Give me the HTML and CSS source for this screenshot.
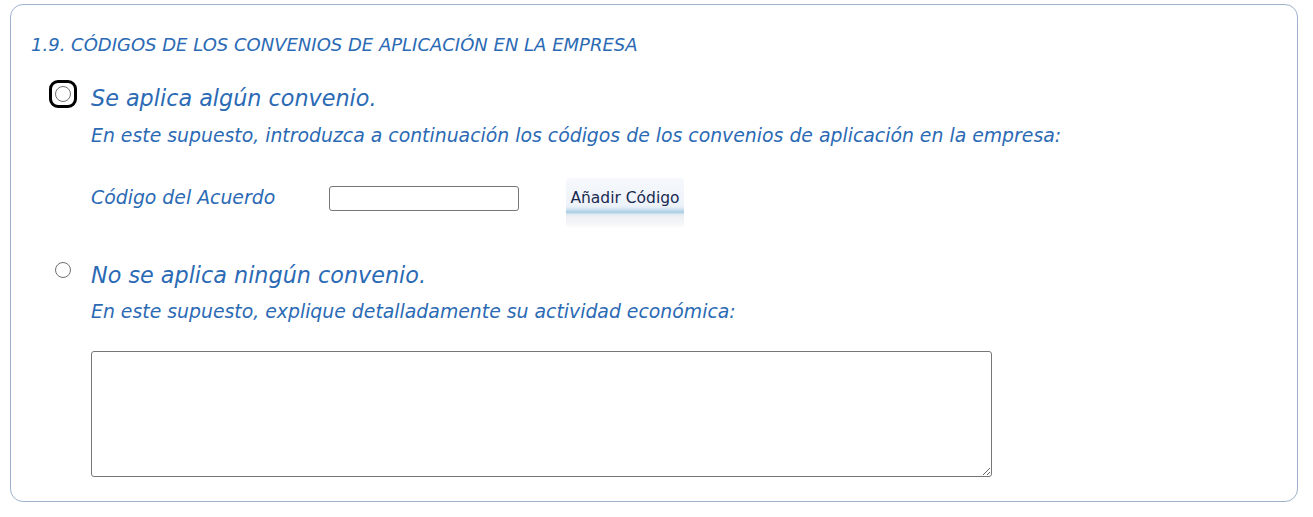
FILE: index.html
```html
<!DOCTYPE html>
<html lang="es">
<head>
<meta charset="utf-8">
<link rel="stylesheet" href="styles.css">
</head>
<body>
<div class="panel">
  <div class="title">1.9. CÓDIGOS DE LOS CONVENIOS DE APLICACIÓN EN LA EMPRESA</div>
  <div class="option option1">
    <span class="radio-wrap focused"><span class="radio"></span></span>
    <span class="opt-label">Se aplica algún convenio.</span>
  </div>
  <div class="hint">En este supuesto, introduzca a continuación los códigos de los convenios de aplicación en la empresa:</div>
  <div class="code-row">
    <span class="code-label">Código del Acuerdo</span>
    <input class="code-input" type="text">
    <span class="btn">Añadir Código</span>
  </div>
  <div class="option option2">
    <span class="radio-wrap"><span class="radio"></span></span>
    <span class="opt-label">No se aplica ningún convenio.</span>
  </div>
  <div class="hint hint2">En este supuesto, explique detalladamente su actividad económica:</div>
  <textarea class="activity"></textarea>
</div>
</body>
</html>
```
FILE: styles.css
```css
html, body { margin: 0; padding: 0; background: #fff; }
body { padding: 4px 15px 0 10px; font-family: "DejaVu Sans", "Liberation Sans", sans-serif; }
.panel {
  border: 1px solid #9db3cb;
  border-radius: 13px;
  height: 498px;
  box-sizing: border-box;
  padding: 0 0 0 20px;
  color: #2b6ab4;
  font-style: italic;
}
.title { font-size: 18px; line-height: 24px; margin-top: 28px; }
.option { display: flex; align-items: flex-start; height: 28px; }
.option1 { margin-top: 23px; }
.radio-wrap {
  width: 28px; height: 28px; box-sizing: border-box;
  display: flex; align-items: center; justify-content: center;
  margin-left: 18px; margin-right: 14px;
  border-radius: 9px;
  border: 3px solid transparent;
  flex: none;
}
.radio-wrap.focused { border-color: #000; }
.radio {
  width: 16px; height: 16px; border: 1.5px solid #6f6f6f; border-radius: 50%;
  box-sizing: border-box; background: #fff;
}
.opt-label { font-size: 22.3px; line-height: 28px; }
.option1 .opt-label { margin-top: 4px; }
.hint { font-size: 18.85px; line-height: 24px; margin-left: 60px; margin-top: 16px; }
.code-row { display: flex; align-items: flex-start; margin-left: 60px; margin-top: 30px; height: 50px; }
.code-label { font-size: 18.85px; line-height: 24px; width: 238px; margin-top: 8px; }
.code-input {
  width: 190px; height: 25px; box-sizing: border-box; margin: 8px 0 0 0;
  border: 1px solid #767676; border-radius: 3px; padding: 0;
}
.btn {
  margin-left: 47px; width: 118px; height: 49px; box-sizing: border-box;
  font-style: normal; font-size: 15.5px; line-height: 20px; color: #1a2a50;
  text-align: center; padding-top: 10px;
  border-radius: 4px 4px 0 0;
  background: linear-gradient(#f6f8fc 0, #eef3fa 55%, #e4edf7 60%, #cfe2f0 64%, #a9cde3 70%, #dfe9f1 74%, #eeeff4 78%, #f3f4f7 90%, #fbfbfc 100%);
}
.option2 { margin-top: 28px; }
.option2 .opt-label { margin-top: 5px; }
.hint2 { margin-top: 16px; }
.activity {
  display: block; margin: 27px 0 0 60px; width: 901px; height: 126px; box-sizing: border-box;
  border: 1px solid #767676; border-radius: 3px; resize: both; padding: 2px;
}
```
